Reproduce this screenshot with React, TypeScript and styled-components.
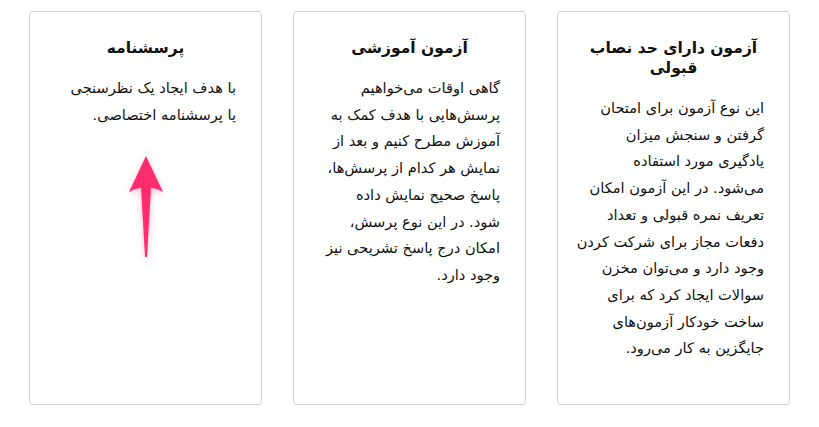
import styled, { createGlobalStyle } from 'styled-components'

const GlobalStyle = createGlobalStyle`
  html, body {
    margin: 0;
    padding: 0;
    background: #ffffff;
  }
  body {
    font-family: 'DejaVu Sans', 'Noto Sans', sans-serif;
    color: #111;
  }
`

const Wrapper = styled.div`
  display: flex;
  direction: rtl;
  justify-content: center;
  gap: 31px;
  padding-top: 11px;
`

const Card = styled.div`
  box-sizing: border-box;
  width: 233px;
  height: 394px;
  border: 1px solid #d4d4d4;
  border-radius: 4px;
  padding: 26px 25px 0;
  display: flex;
  flex-direction: column;
`

const Title = styled.h3`
  margin: 0 0 17px;
  font-size: 15.5px;
  font-weight: 700;
  line-height: 20px;
  text-align: center;
  padding: 0 6px;
`

const Text = styled.p`
  margin: 0;
  font-size: 14.6px;
  line-height: 26.7px;
  text-align: right;
`

const Line = styled.span`
  display: block;
  white-space: nowrap;
`

const ArrowBox = styled.div`
  display: flex;
  justify-content: center;
  margin-top: 26px;
  svg {
    filter: drop-shadow(0 2px 3px rgba(255, 45, 107, 0.35));
  }
`

const UpArrow = () => (
  <svg width="40" height="106" viewBox="0 0 40 106">
    <path
      d="M20 2 L37 38 Q30 34 25 34 L21 103 L19 103 L15 34 Q10 34 3 38 Z"
      fill="#ff2d6d"
    />
  </svg>
)

const cards = [
  {
    title: 'آزمون دارای حد نصاب قبولی',
    lines: [
      'این نوع آزمون برای امتحان',
      'گرفتن و سنجش میزان',
      'یادگیری مورد استفاده',
      'می‌شود. در این آزمون امکان',
      'تعریف نمره قبولی و تعداد',
      'دفعات مجاز برای شرکت کردن',
      'وجود دارد و می‌توان مخزن',
      'سوالات ایجاد کرد که برای',
      'ساخت خودکار آزمون‌های',
      'جایگزین به کار می‌رود.',
    ],
  },
  {
    title: 'آزمون آموزشی',
    lines: [
      'گاهی اوقات می‌خواهیم',
      'پرسش‌هایی با هدف کمک به',
      'آموزش مطرح کنیم و بعد از',
      'نمایش هر کدام از پرسش‌ها،',
      'پاسخ صحیح نمایش داده',
      'شود. در این نوع پرسش،',
      'امکان درج پاسخ تشریحی نیز',
      'وجود دارد.',
    ],
  },
  {
    title: 'پرسشنامه',
    lines: ['با هدف ایجاد یک نظرسنجی', 'یا پرسشنامه اختصاصی.'],
    arrow: true,
  },
]

const App = () => {
  return (
    <>
      <GlobalStyle />
      <Wrapper>
        {cards.map((c) => (
          <Card key={c.title}>
            <Title>{c.title}</Title>
            <Text>
              {c.lines.map((l) => (
                <Line key={l}>{l}</Line>
              ))}
            </Text>
            {c.arrow && (
              <ArrowBox>
                <UpArrow />
              </ArrowBox>
            )}
          </Card>
        ))}
      </Wrapper>
    </>
  )
}

export default App
